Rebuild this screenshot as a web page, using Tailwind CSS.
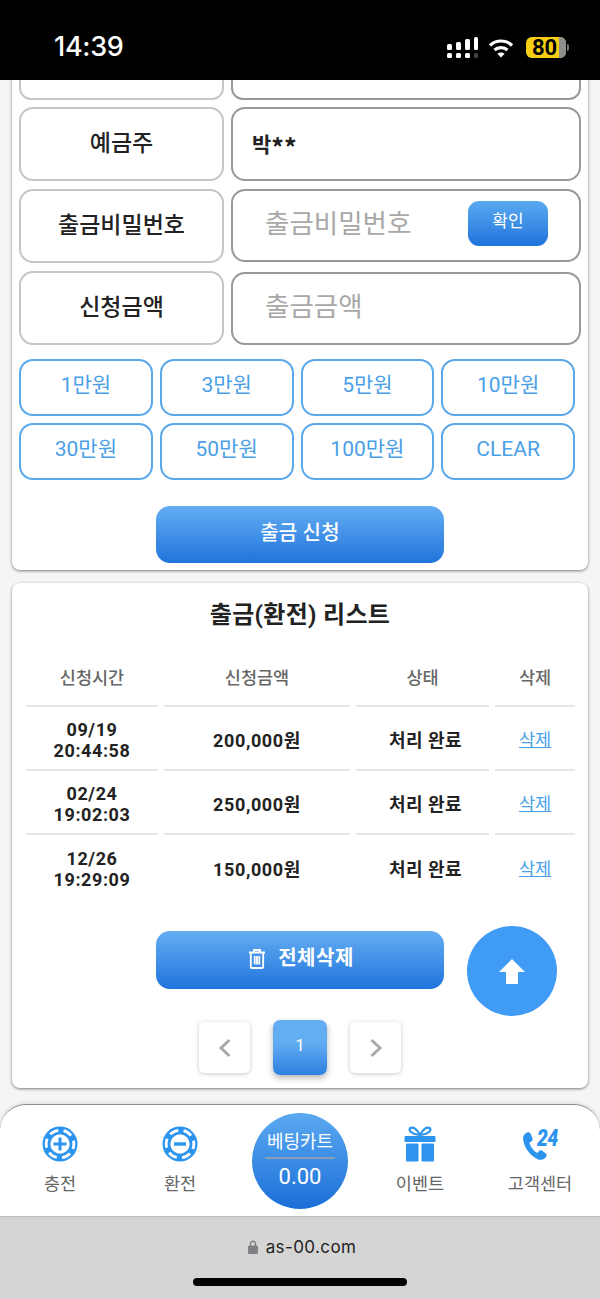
<!doctype html>
<html lang="ko">
<head>
<meta charset="utf-8">
<script src="https://cdn.jsdelivr.net/npm/@tailwindcss/browser@4"></script>
</head>
<body class="m-0 bg-[#f5f5f5] font-['Roboto','Noto_Sans_CJK_KR',sans-serif] text-[#222]">
<div class="relative flex h-[1299px] w-[600px] flex-col overflow-hidden">
  <!-- status bar -->
  <div class="relative z-20 flex h-[80px] shrink-0 items-start justify-between bg-black pl-[54px] pr-[31px] pt-[31px] text-white">
    <div class="font-['Inter',sans-serif] text-[27px] font-medium leading-[32px] tracking-[-0.3px]">14:39</div>
    <div class="flex items-center pt-[6px]">
      <svg width="31" height="21" viewBox="0 0 31 21"><g fill="#fff"><rect x="0" y="16" width="5" height="5" rx="1.5"/><rect x="9" y="16" width="5" height="5" rx="1.5"/><rect x="18" y="16" width="5" height="5" rx="1.5"/><rect x="27" y="16" width="4" height="5" rx="1.5" fill="#444"/><rect x="0" y="7" width="5" height="6" rx="1.5"/><rect x="9" y="5" width="5" height="8" rx="1.5"/><rect x="18" y="2" width="5" height="11" rx="1.5"/><rect x="27" y="0" width="4" height="13" rx="1.5"/></g></svg>
      <svg class="ml-[10px]" width="26" height="20" viewBox="0 0 26 20" fill="none" stroke="#fff" stroke-width="3.2"><path d="M2 7.5C8 1.5 18 1.5 24 7.5"/><path d="M6.5 12C10 8.7 16 8.7 19.5 12"/><path d="M13 19.5l-3.6-3.8c2-1.7 5.2-1.7 7.2 0z" fill="#fff" stroke="none"/></svg>
      <div class="ml-[12px] flex items-center">
        <div class="relative flex h-[21px] w-[40px] items-center rounded-[6px] bg-[#f8ce14] pl-[6px] text-[22px] font-bold leading-[21px] text-black"><span class="absolute bottom-0 right-0 top-0 w-[7px] rounded-r-[6px] bg-[#8d8d8d]"></span><span class="relative">80</span></div>
        <span class="ml-[1px] h-[7px] w-[2px] rounded-r-full bg-[#777]"></span>
      </div>
    </div>
  </div>

  <!-- scrolled page -->
  <main class="relative h-[1024px] shrink-0 overflow-hidden">
    <section class="mx-[12px] mt-[-80px] rounded-b-[8px] bg-white px-[7px] pb-[7px] pt-[8px] shadow-[0_1px_3px_rgba(0,0,0,0.5)]">
      <div class="grid grid-cols-[205px_350px] gap-x-[7px]">
        <div class="flex h-[92px] items-center justify-center rounded-[12px] border-2 border-[#c6c6c6]"></div>
        <div class="h-[92px] rounded-[12px] border-2 border-[#999]"></div>

        <div class="mt-[7px] flex h-[74px] items-center justify-center rounded-[14px] border-2 border-[#c6c6c6] text-[23px] font-medium">예금주</div>
        <div class="mt-[7px] flex h-[74px] items-center rounded-[14px] border-2 border-[#999] pl-[19px] font-['Noto_Sans_CJK_KR',sans-serif] text-[21px] font-bold">박<span class="mt-[5px] text-[25px] leading-none">**</span></div>

        <div class="mt-[8px] flex h-[74px] items-center justify-center rounded-[14px] border-2 border-[#c6c6c6] text-[23px] font-medium">출금비밀번호</div>
        <div class="mt-[8px] flex h-[73px] items-center justify-between rounded-[14px] border-2 border-[#999] pb-[4px] pl-[32px] pr-[31px] text-[26.5px] text-[#a8a8a8]">
          <span>출금비밀번호</span>
          <button class="flex h-[45px] w-[80px] items-center justify-center rounded-[11px] bg-gradient-to-b from-[#5aa9f0] to-[#1f74dc] pb-[3px] text-[17px] text-white">확인</button>
        </div>

        <div class="mt-[8px] flex h-[74px] items-center justify-center rounded-[14px] border-2 border-[#c6c6c6] text-[23px] font-medium">신청금액</div>
        <div class="mt-[9px] flex h-[73px] items-center rounded-[14px] border-2 border-[#999] pb-[4px] pl-[32px] text-[26.5px] text-[#a8a8a8]">출금금액</div>
      </div>

      <div class="mt-[14px] grid w-[556px] grid-cols-4 gap-x-[7px] gap-y-[7px] text-[21px] text-[#4a9fe8]">
        <button class="h-[57px] rounded-[14px] border-2 border-[#5aa8ec] pb-[4px]">1만원</button>
        <button class="h-[57px] rounded-[14px] border-2 border-[#5aa8ec] pb-[4px]">3만원</button>
        <button class="h-[57px] rounded-[14px] border-2 border-[#5aa8ec] pb-[4px]">5만원</button>
        <button class="h-[57px] rounded-[14px] border-2 border-[#5aa8ec] pb-[4px]">10만원</button>
        <button class="h-[57px] rounded-[14px] border-2 border-[#5aa8ec] pb-[4px]">30만원</button>
        <button class="h-[57px] rounded-[14px] border-2 border-[#5aa8ec] pb-[4px]">50만원</button>
        <button class="h-[57px] rounded-[14px] border-2 border-[#5aa8ec] pb-[4px]">100만원</button>
        <button class="h-[57px] rounded-[14px] border-2 border-[#5aa8ec] pb-[4px]">CLEAR</button>
      </div>

      <button class="mx-auto mt-[26px] flex h-[57px] w-[288px] items-center justify-center rounded-[14px] bg-gradient-to-b from-[#63adf2] to-[#1f74dc] pb-[4px] text-[20px] font-medium tracking-[0.2px] text-white">출금 신청</button>
    </section>

    <section class="mx-[12px] mt-[13px] h-[505px] rounded-[8px] bg-white px-[14px] pt-[14px] shadow-[0_1px_3px_rgba(0,0,0,0.5)]">
      <h2 class="text-center text-[24px] font-bold leading-[36px] tracking-[0.3px]">출금(환전) 리스트</h2>
      <div class="mt-[14px] grid grid-cols-[132px_186px_133px_80px] gap-x-[6px] text-center text-[18px] font-bold leading-[21px] tracking-[0.6px]">
        <div class="flex h-[60px] items-center justify-center border-b-2 border-[#e6e6e6] pt-[4px] text-[17.5px] font-medium tracking-normal text-[#666]">신청시간</div>
        <div class="flex h-[60px] items-center justify-center border-b-2 border-[#e6e6e6] pt-[4px] text-[17.5px] font-medium tracking-normal text-[#666]">신청금액</div>
        <div class="flex h-[60px] items-center justify-center border-b-2 border-[#e6e6e6] pt-[4px] text-[17.5px] font-medium tracking-normal text-[#666]">상태</div>
        <div class="flex h-[60px] items-center justify-center border-b-2 border-[#e6e6e6] pt-[4px] text-[17.5px] font-medium tracking-normal text-[#666]">삭제</div>

        <div class="flex h-[64px] items-center justify-center border-b-2 border-[#e6e6e6] pt-[4px]">09/19<br>20:44:58</div>
        <div class="flex h-[64px] items-center justify-center border-b-2 border-[#e6e6e6] pt-[4px]">200,000원</div>
        <div class="flex h-[64px] items-center justify-center border-b-2 border-[#e6e6e6] pl-[6px] pt-[4px] tracking-[0.5px]">처리 완료</div>
        <div class="flex h-[64px] items-center justify-center border-b-2 border-[#e6e6e6] pt-[4px] text-[17.5px] font-normal tracking-normal text-[#4a9fe8] underline">삭제</div>

        <div class="flex h-[64px] items-center justify-center border-b-2 border-[#e6e6e6] pt-[4px]">02/24<br>19:02:03</div>
        <div class="flex h-[64px] items-center justify-center border-b-2 border-[#e6e6e6] pt-[4px]">250,000원</div>
        <div class="flex h-[64px] items-center justify-center border-b-2 border-[#e6e6e6] pl-[6px] pt-[4px] tracking-[0.5px]">처리 완료</div>
        <div class="flex h-[64px] items-center justify-center border-b-2 border-[#e6e6e6] pt-[4px] text-[17.5px] font-normal tracking-normal text-[#4a9fe8] underline">삭제</div>

        <div class="flex h-[64px] items-center justify-center pt-[4px]">12/26<br>19:29:09</div>
        <div class="flex h-[64px] items-center justify-center pt-[4px]">150,000원</div>
        <div class="flex h-[64px] items-center justify-center pl-[6px] pt-[4px] tracking-[0.5px]">처리 완료</div>
        <div class="flex h-[64px] items-center justify-center pt-[4px] text-[17.5px] font-normal tracking-normal text-[#4a9fe8] underline">삭제</div>
      </div>

      <button class="mx-auto mt-[32px] flex h-[58px] w-[288px] items-center justify-center gap-[12px] rounded-[14px] bg-gradient-to-b from-[#63adf2] to-[#1f74dc] pb-[4px] pl-[2px] text-[20px] font-bold tracking-[0.5px] text-white">
        <svg width="18" height="21" viewBox="0 0 18 21" fill="none" stroke="#fff" stroke-width="1.8"><path d="M1 4.500h16M6 4.500V2h6v2.500M2.800 4.500v14.200c0 .8.6 1.300 1.300 1.300h9.800c.7 0 1.300-.5 1.300-1.300V4.500M6.700 8v8.500M9 8v8.500M11.300 8v8.500"/></svg>
        전체삭제
      </button>

      <div class="mt-[31px] flex items-center justify-center gap-[23px]">
        <button class="flex h-[51px] w-[51px] items-center justify-center rounded-[5px] bg-white shadow-[0_1px_4px_rgba(0,0,0,0.22)]">
          <svg width="14" height="20" viewBox="0 0 14 20" fill="none" stroke="#a9a9a9" stroke-width="3"><path d="M11.500 2L3 10l8.500 8"/></svg>
        </button>
        <button class="flex h-[55px] w-[54px] items-center justify-center rounded-[7px] bg-gradient-to-b from-[#63adf2] from-40% to-[#2a7fe0] pb-[3px] text-[17px] text-white shadow-[0_3px_6px_rgba(0,0,0,0.3)]">1</button>
        <button class="flex h-[51px] w-[51px] items-center justify-center rounded-[5px] bg-white shadow-[0_1px_4px_rgba(0,0,0,0.22)]">
          <svg width="14" height="20" viewBox="0 0 14 20" fill="none" stroke="#a9a9a9" stroke-width="3"><path d="M2.500 2L11 10l-8.500 8"/></svg>
        </button>
      </div>
    </section>

    <button class="absolute left-[467px] top-[846px] flex h-[90px] w-[90px] items-center justify-center rounded-full bg-[#3f9bf3]">
      <svg width="26" height="26" viewBox="0 0 26 26"><path d="M13 1L26 14H19V26H7V14H0z" fill="#fff"/></svg>
    </button>
  </main>

  <!-- bottom nav -->
  <nav class="relative z-10 grid h-[113px] shrink-0 grid-cols-5 rounded-t-[26px] border-b border-t border-b-[#bdbdbd] border-t-[#8f8f8f] bg-white text-[17.5px] text-[#666] shadow-[0_-1px_4px_rgba(0,0,0,0.12)]">
    <a class="flex flex-col items-center pt-[21px]">
      <svg width="36" height="36" viewBox="0 0 36 36">
        <circle cx="18" cy="18" r="17.500" fill="#2c93ee"/>
        <circle cx="18" cy="18" r="13.800" fill="none" stroke="#fff" stroke-width="2.800" stroke-dasharray="9 5.450" stroke-dashoffset="4"/>
        <circle cx="18" cy="18" r="10.500" fill="#fff" stroke="#2c93ee" stroke-width="1.600"/>
        <path d="M18 11.500v13M11.500 18h13" stroke="#2c93ee" stroke-width="3"/>
      </svg>
      <span class="mt-[9px] leading-[26px]">충전</span>
    </a>
    <a class="flex flex-col items-center pt-[21px]">
      <svg width="36" height="36" viewBox="0 0 36 36">
        <circle cx="18" cy="18" r="17.500" fill="#2c93ee"/>
        <circle cx="18" cy="18" r="13.800" fill="none" stroke="#fff" stroke-width="2.800" stroke-dasharray="9 5.450" stroke-dashoffset="4"/>
        <circle cx="18" cy="18" r="10.500" fill="#fff" stroke="#2c93ee" stroke-width="1.600"/>
        <path d="M12 18h12" stroke="#2c93ee" stroke-width="3.400"/>
      </svg>
      <span class="mt-[9px] leading-[26px]">환전</span>
    </a>
    <a class="flex flex-col items-center pt-[8px]">
      <div class="flex h-[96px] w-[96px] flex-col items-center rounded-full bg-gradient-to-b from-[#5aa9f0] to-[#1a6fd8] pt-[16px] text-white">
        <span class="text-[18px] leading-[25px]">베팅카트</span>
        <span class="mt-[3px] h-[2px] w-[70px] bg-[#8a9fb5]"></span>
        <span class="mt-[3px] text-[22px] leading-[30px]">0.00</span>
      </div>
    </a>
    <a class="flex flex-col items-center pt-[21px]">
      <svg width="32" height="36" viewBox="0 0 32 36" fill="#2c93ee">
        <path d="M16 9C13 3 9 0.500 6.500 2 4 3.700 6.500 8 16 9 25.500 8 28 3.700 25.500 2 23 0.500 19 3 16 9z" fill="none" stroke="#2c93ee" stroke-width="2.200"/>
        <rect x="0.500" y="10" width="31" height="6" rx="1.200"/>
        <rect x="2" y="17.500" width="12.500" height="18" rx="1.200"/>
        <rect x="17.500" y="17.500" width="12.500" height="18" rx="1.200"/>
      </svg>
      <span class="mt-[9px] leading-[26px]">이벤트</span>
    </a>
    <a class="flex flex-col items-center pt-[21px]">
      <div class="relative h-[36px] w-[36px]">
        <svg class="absolute left-0 top-[5px]" width="28" height="30" viewBox="0 0 28 30"><path d="M5.200 1.500C2.500 2.500.8 5 1.100 8c.8 8 6.500 16.500 14.500 20.200 2.800 1.200 6 .4 8-1.800 1.200-1.300 1.400-3 .2-3.900l-3.600-2.700c-1.100-.8-2.600-.6-3.500.4l-1.500 1.700c-4-2-6.800-6.500-7.800-10.300l2-1.200c1.100-.7 1.600-2 1.100-3.200L8.700 2.900C8.100 1.500 6.500 1 5.200 1.500z" fill="#2c93ee"/></svg>
        <span class="absolute left-[15px] top-[0px] origin-left scale-x-[0.8] text-[24px] font-black italic leading-[24px] tracking-[-0.5px] text-[#2c93ee]">24</span>
      </div>
      <span class="mt-[9px] leading-[26px]">고객센터</span>
    </a>
  </nav>

  <!-- browser bar -->
  <div class="relative flex-1 bg-[#d5d5d5]">
    <div class="flex items-center justify-center gap-[8px] pl-[4px] pt-[18px] font-['Inter',sans-serif] text-[17px] leading-[24px] tracking-[0.4px] text-[#222]">
      <svg width="10" height="14" viewBox="0 0 10 14"><path d="M2.500 6V3.800a2.500 2.500 0 0 1 5 0V6" fill="none" stroke="#808084" stroke-width="1.400"/><rect x="0" y="5.500" width="10" height="8.500" rx="1.500" fill="#808084"/></svg>
      <span>as-00.com</span>
    </div>
    <div class="mx-auto mt-[19px] h-[8px] w-[214px] rounded-full bg-black"></div>
  </div>
</div>
</body>
</html>
